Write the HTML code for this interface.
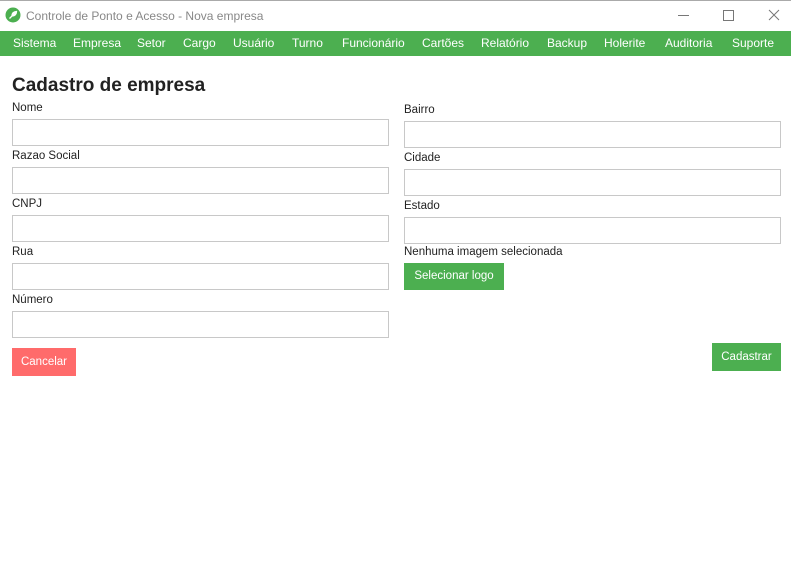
<!DOCTYPE html>
<html><head><style>
body{margin:0;width:791px;height:579px;background:#fff;font-family:"Liberation Sans",sans-serif;position:relative;overflow:hidden;color:#222}
.a{position:absolute;white-space:nowrap}
.tb{position:absolute;left:0;top:0;width:791px;height:31px;border-top:1px solid #aaa;box-sizing:border-box}
.menu{position:absolute;left:0;top:31px;width:791px;height:25px;background:#4caf50}
.menu span{position:absolute;top:5px;color:#fff;font-size:12px}
.lbl{position:absolute;font-size:11.5px;color:#222}
.in{position:absolute;width:377px;height:27px;border:1px solid #c8c8c8;box-sizing:border-box}
.btn{position:absolute;color:#fff;font-size:11.5px;text-align:center;box-sizing:border-box}
</style></head><body>
<div class="tb"></div>
<svg class="a" style="left:5px;top:7px" width="16" height="16" viewBox="0 0 16 16"><circle cx="8" cy="8" r="7.5" fill="#4caf50"/><path d="M4.5 11.5 L8 8 M7 9 C7 6 9 4.5 11.5 4.5 C11.5 7 10 9 7 9Z" stroke="#fff" fill="#fff" stroke-width="1.3"/></svg>
<div class="a" style="left:26px;top:9px;font-size:12px;color:#888">Controle de Ponto e Acesso - Nova empresa</div>
<div class="a" style="left:678px;top:15px;width:11px;height:1px;background:#777"></div>
<div class="a" style="left:723px;top:10px;width:9px;height:9px;border:1px solid #777"></div>
<svg class="a" style="left:768px;top:9px" width="12" height="12"><path d="M1 1L11 11M11 1L1 11" stroke="#777"/></svg>
<div class="menu">
<span style="left:13px">Sistema</span><span style="left:73px">Empresa</span><span style="left:137px">Setor</span><span style="left:183px">Cargo</span><span style="left:233px">Usuário</span><span style="left:292px">Turno</span><span style="left:342px">Funcionário</span><span style="left:422px">Cartões</span><span style="left:481px">Relatório</span><span style="left:547px">Backup</span><span style="left:604px">Holerite</span><span style="left:665px">Auditoria</span><span style="left:732px">Suporte</span>
</div>
<div class="a" style="left:12px;top:75px;font-size:19px;font-weight:bold;color:#222">Cadastro de empresa</div>
<div class="lbl" style="left:12px;top:102px">Nome</div><div class="in" style="left:12px;top:119px"></div>
<div class="lbl" style="left:12px;top:150px">Razao Social</div><div class="in" style="left:12px;top:167px"></div>
<div class="lbl" style="left:12px;top:198px">CNPJ</div><div class="in" style="left:12px;top:215px"></div>
<div class="lbl" style="left:12px;top:246px">Rua</div><div class="in" style="left:12px;top:263px"></div>
<div class="lbl" style="left:12px;top:294px">Número</div><div class="in" style="left:12px;top:311px"></div>
<div class="lbl" style="left:404px;top:104px">Bairro</div><div class="in" style="left:404px;top:121px"></div>
<div class="lbl" style="left:404px;top:152px">Cidade</div><div class="in" style="left:404px;top:169px"></div>
<div class="lbl" style="left:404px;top:200px">Estado</div><div class="in" style="left:404px;top:217px"></div>
<div class="lbl" style="left:404px;top:246px">Nenhuma imagem selecionada</div>
<div class="btn" style="left:404px;top:263px;width:100px;height:27px;line-height:27px;background:#4caf50">Selecionar logo</div>
<div class="btn" style="left:12px;top:348px;width:64px;height:28px;line-height:28px;background:#ff6b6b">Cancelar</div>
<div class="btn" style="left:712px;top:343px;width:69px;height:28px;line-height:28px;background:#4caf50">Cadastrar</div>
</body></html>
